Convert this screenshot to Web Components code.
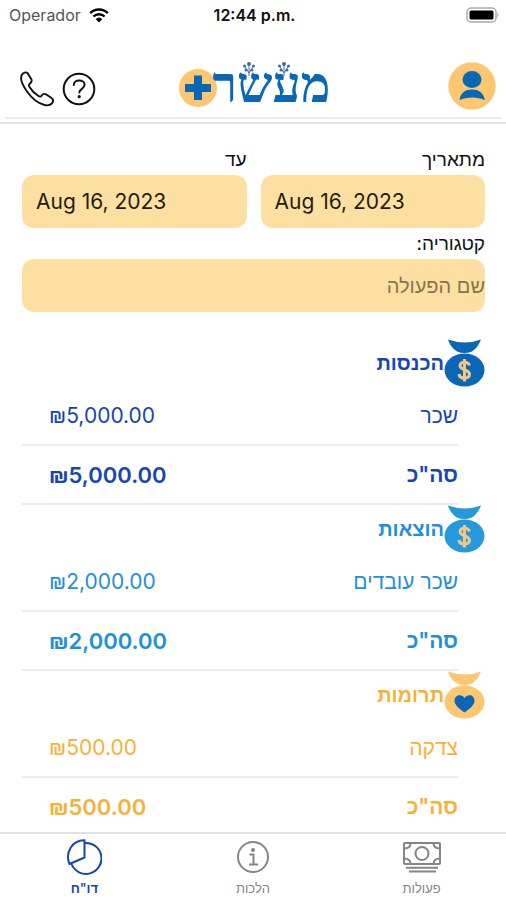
<!DOCTYPE html>
<html lang="he">
<head>
<meta charset="utf-8">
<meta name="viewport" content="width=device-width, initial-scale=1">
<title>מעשר+</title>
<style>
html, body { margin: 0; height: 100%; background: #fff; }
body { font-family: Inter, "Liberation Sans", sans-serif; color: #111; }
</style>
</head>
<body>
<maaser-app></maaser-app>
<script>
const define = (name, html, setup) => customElements.define(name, class extends HTMLElement {
  connectedCallback() {
    if (this.shadowRoot) return;
    const t = document.createElement('template');
    t.innerHTML = html;
    this.attachShadow({ mode: 'open' }).append(t.content.cloneNode(true));
    if (setup) setup(this, this.shadowRoot);
  }
});

define('status-bar', `
<style>
:host { display: grid; grid-template-columns: 1fr auto 1fr; align-items: center; height: 30px; padding: 0 6px 0 9px; font-size: 16px; line-height: 20px; }
.left { display: flex; align-items: center; gap: 8px; color: #555; }
.time { font-weight: 600; font-size: 16px; }
.battery { justify-self: end; display: block; }
</style>
<div class="left"><span>Operador</span>
<svg width="20" height="15" viewBox="0 0 20 15" fill="none" stroke="#000" stroke-width="2.4"><path d="M1.2 5.1a12.6 12.6 0 0 1 17.6 0M4.4 8.5a8 8 0 0 1 11.2 0"/><path d="M10 14.6l3.3-3.5a4.8 4.8 0 0 0-6.6 0z" fill="#000" stroke="none"/></svg></div>
<span class="time">12:44 p.m.</span>
<svg class="battery" width="34" height="16" viewBox="0 0 34 16"><rect x="1" y="1" width="29" height="14" rx="4" fill="none" stroke="#aaa" stroke-width="1.5"/><rect x="3.5" y="3.5" width="24" height="9" rx="1.5"/><path d="M31.5 5.5q2 2.5 0 5z" fill="#999"/></svg>`);

define('brand-logo', `
<style>
:host { display: block; color: #0a67b5; }
.mark { display: flex; align-items: center; position: relative; }
svg { display: block; flex: none; }
.word { font: 700 50px/50px "Liberation Serif", serif; margin-left: -4px; padding-bottom: 6px; }
.buds { position: absolute; right: 36px; top: 1px; }
</style>
<div class="mark">
<svg width="38" height="38" viewBox="0 0 38 38"><circle cx="19" cy="19" r="19" fill="#fdc671"/><path d="M15 6.500h8V15h9v8h-9v8h-8v-8H6v-8h9z" fill="#0a67b5"/></svg>
<span class="word" dir="rtl">מעשר</span>
<svg class="buds" width="53" height="16" viewBox="0 0 53 16" fill="#4268b4"><g id="b"><circle cx="8" cy="3" r="2"/><circle cx="3.500" cy="5" r="1.500"/><circle cx="12.500" cy="5" r="1.500"/><circle cx="5" cy="9" r="1.500"/><circle cx="11" cy="9" r="1.500"/><path d="M8 3v12M3.500 5 8 12l4.500-7" fill="none" stroke="#4268b4"/></g><use href="#b" x="35"/></svg>
</div>`);

define('app-header', `
<style>
:host { display: block; border-bottom: 2px solid #e4e4e4; padding: 0 5px 3px; }
.bar { display: grid; grid-template-columns: 1fr auto 1fr; align-items: center; height: 89px; padding: 0 0 0 15px; border-bottom: 2px solid #ececec; box-sizing: border-box; }
.left { display: flex; align-items: center; gap: 8px; padding-top: 30px; }
brand-logo { padding-top: 29px; padding-right: 12px; }
button { border: 0; padding: 0; background: none; color: #111; }
svg { display: block; }
.me { justify-self: end; padding-top: 24px; padding-right: 5px; }
</style>
<div class="bar">
<div class="left">
<button aria-label="Phone"><svg width="34" height="36" viewBox="0 0 34 36" fill="none" stroke="#111" stroke-width="1.900" stroke-linejoin="round"><path d="M2 3.500C3.500 1.500 6 .8 7.500 2l4 6.500c.8 2-.5 3.300-2 4.500-.8.800-.8 1.700 0 3 2 3.300 5 6.500 9 9 1.300.800 2.300.8 3-.2 1-1.600 2.500-2.500 4.500-1.500l5.500 3.700c1.800 1.300 2 2.700 1 4.500-1.500 2.500-4.500 3.300-8 2.500C18.500 32.500 12 27.500 7 20.500 3.500 15.500-.5 7.500 2 3.500z"/></svg></button>
<button aria-label="Help"><svg width="34" height="34" viewBox="0 0 34 34" fill="none" stroke="#111" stroke-width="2"><circle cx="17" cy="17" r="15.300"/><path d="M11.800 13c0-6 10.800-5.800 10.800-.2 0 4-5.300 4-5.300 7.700" stroke-linecap="round"/><circle cx="17.200" cy="24.700" r="1.600" fill="#111" stroke="none"/></svg></button>
</div>
<brand-logo></brand-logo>
<button class="me" aria-label="Profile"><svg width="48" height="48" viewBox="0 0 48 48"><circle cx="24" cy="24" r="23.700" fill="#fdc671"/><ellipse cx="24" cy="17.500" rx="9.500" ry="8.500" fill="#0a67b5"/><path d="M11.500 38c1-7.500 6-10.500 12.500-10.500S35.500 30.500 37 38c-8-3.500-17.500-3.500-25.500 0z" fill="#0a67b5"/></svg></button>
</div>`);

define('form-field', `
<style>
:host { display: flex; flex-direction: column; min-width: 0; }
label { font-size: 19px; line-height: 24px; direction: rtl; padding: 4px 0 3px; }
input { box-sizing: border-box; width: 100%; height: 53px; border: 0; border-radius: 12px; background: #fde0a1; color: #221c10; font: inherit; font-size: 21px; padding: 0 14px; outline: 0; }
input[dir=rtl] { padding: 0; font-size: 20px; }
input::placeholder { color: #85754f; opacity: 1; }
</style>
<label for="f"></label><input id="f" type="text">`, (el, r) => {
  const i = r.querySelector('input');
  r.querySelector('label').textContent = el.getAttribute('label');
  i.value = el.getAttribute('value') || '';
  i.placeholder = el.getAttribute('placeholder') || '';
  i.dir = el.hasAttribute('placeholder') ? 'rtl' : 'ltr';
});

define('money-bag', `
<style>:host { display: block; } svg { display: block; }</style>
<svg width="41" height="48" viewBox="0 0 41 48"><path d="M4 .5q17 6 33 0-3 8-9 12-8 3-15 0Q6 8 4 .5z" fill="currentColor"/><ellipse cx="20.500" cy="31" rx="20" ry="16.500" fill="currentColor"/><g class="mark"></g></svg>`, (el, r) => {
  r.querySelector('.mark').innerHTML = el.getAttribute('mark') === 'heart'
    ? '<path d="M20.500 41.500C15 37.500 10.500 34 10.500 29.500c0-5.500 7-7.500 10-2.500 3-5 10-3 10 2.500 0 4.500-4.500 8-10 12z" fill="#0a67b5"/>'
    : '<path d="M25.500 26.500c-1-4.500-9.500-4.500-9.500 0 0 5 9.500 3.500 9.500 9 0 5-10 5-10.500-.5M20.500 20v22.500" fill="none" stroke="#f3c886" stroke-width="3"/>';
});

define('report-section', `
<style>
:host { display: block; color: var(--tone); direction: rtl; }
h2 { display: flex; align-items: center; height: 48px; margin: 0; font-size: 20px; line-height: 24px; font-weight: 700; }
money-bag { color: var(--bag); }
table { width: calc(100% - 27px); margin-right: 27px; border-collapse: separate; border-spacing: 0; font-size: 21px; line-height: 28px; }
th, td { box-sizing: border-box; height: 59px; padding: 0; border-bottom: 2px solid #ececec; font-weight: 400; text-align: right; }
td { direction: ltr; text-align: left; padding-left: 27px; }
tfoot th, tfoot td { font-weight: 600; }
tfoot td { font-size: 22px; }
</style>
<h2><money-bag></money-bag><span class="t"></span></h2>
<table><tbody><tr><th scope="row" class="n"></th><td class="a"></td></tr></tbody>
<tfoot><tr><th scope="row">סה"כ</th><td class="a"></td></tr></tfoot></table>`, (el, r) => {
  const bag = document.createElement('money-bag');
  bag.setAttribute('mark', el.getAttribute('mark') || 'dollar');
  r.querySelector('money-bag').replaceWith(bag);
  r.querySelector('.t').textContent = el.getAttribute('heading');
  r.querySelector('.n').textContent = el.getAttribute('item');
  r.querySelectorAll('.a').forEach(c => c.textContent = el.getAttribute('amount'));
});

define('tab-item', `
<style>
:host { display: flex; flex: 1; justify-content: center; color: #858585; }
:host([active]) { color: #1645b0; }
a { display: flex; flex-direction: column; align-items: center; gap: 4px; padding-top: 5px; color: inherit; text-decoration: none; font-size: 13px; line-height: 18px; }
:host([active]) a { font-weight: 600; }
</style>
<a href="#"><slot name="icon"></slot><span dir="rtl"><slot></slot></span></a>`);

define('maaser-app', `
<style>
:host { display: flex; flex-direction: column; height: 100vh; }
main { flex: 1; min-height: 0; overflow-y: auto; scrollbar-width: none; padding: 20px 21px 0 22px; }
.dates { display: grid; grid-template-columns: 1fr 1fr; gap: 14px; }
.report { padding-top: 27px; }
.income { --tone: #1546b1; --bag: #0a67b5; }
.spend { --tone: #1e8fd9; --bag: #2698dc; }
.give { --tone: #f8b137; --bag: #fdc671; }
nav { display: flex; height: 68px; box-sizing: border-box; border-top: 2px solid #e2e2e2; flex: none; }
nav svg { display: block; }
</style>
<status-bar></status-bar>
<app-header></app-header>
<main>
<div class="dates"><form-field label="עד" value="Aug 16, 2023"></form-field><form-field label="מתאריך" value="Aug 16, 2023"></form-field></div>
<form-field label="קטגוריה:" placeholder="שם הפעולה"></form-field>
<div class="report">
<report-section class="income" heading="הכנסות" item="שכר" amount="₪5,000.00"></report-section>
<report-section class="spend" heading="הוצאות" item="שכר עובדים" amount="₪2,000.00"></report-section>
<report-section class="give" mark="heart" heading="תרומות" item="צדקה" amount="₪500.00"></report-section>
</div>
</main>
<nav>
<tab-item active><svg slot="icon" width="36" height="36" viewBox="0 0 36 36" fill="none" stroke="currentColor" stroke-width="2" stroke-linejoin="round"><path d="M18.500 18.500V1.200C7 .8-1.500 13 3.500 25z"/><path d="M18.500 4A15.500 15.500 0 1 1 5.500 25"/></svg>דו"ח</tab-item>
<tab-item><svg slot="icon" width="36" height="36" viewBox="0 0 36 36" fill="none" stroke="currentColor" stroke-width="2"><circle cx="18" cy="18" r="15"/><path d="M14.500 15.500H18.500V25M14 25.500h9"/><circle cx="18" cy="11" r="2" fill="currentColor" stroke="none"/></svg>הלכות</tab-item>
<tab-item><svg slot="icon" width="40" height="36" viewBox="0 0 40 36" fill="none" stroke="currentColor" stroke-width="2"><rect x="2" y="4" width="36" height="21" rx="1"/><circle cx="20" cy="14.500" r="6.500"/><path d="M8.500 4q0 5.500-6.500 5.500M31.500 4q0 5.500 6.500 5.500M8.500 25q0-5.500-6.500-5.500M31.500 25q0-5.500 6.500-5.500M4 28.700h32M7 32.500h27"/></svg>פעולות</tab-item>
</nav>`);
</script>
</body>
</html>
